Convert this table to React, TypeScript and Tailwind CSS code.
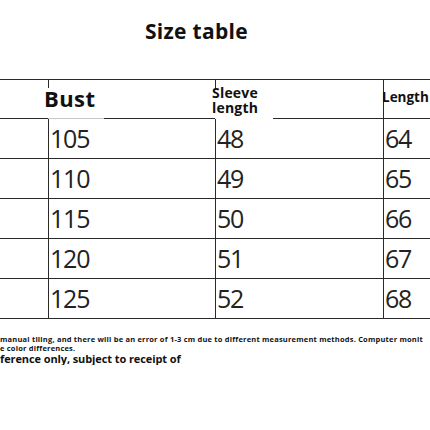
import React from "react";

const rows = [
  ["105", "48", "64"],
  ["110", "49", "65"],
  ["115", "50", "66"],
  ["120", "51", "67"],
  ["125", "52", "68"],
];

export default function App() {
  return (
    <div
      className="w-[430px] h-[430px] overflow-hidden bg-white text-[#111]"
      style={{ fontFamily: '"Open Sans", "Noto Sans", sans-serif' }}
    >
      <div className="pt-[21px] pl-[145px] h-[79px]">
        <div className="text-[21px] leading-none font-bold tracking-[0.3px] whitespace-nowrap">Size table</div>
      </div>

      {/* header */}
      <div className="grid grid-cols-[48px_167px_168px_47px] border-t border-[#2a2a2a] h-[40px]">
        <div className="border-b border-[#2a2a2a]" />
        <div className="relative">
          <div className="absolute left-0 top-0 h-[8px] border-l border-[#2a2a2a]" />
          <div className="absolute left-[56px] right-0 bottom-0 border-b border-[#2a2a2a]" />
          <div className="absolute left-0 w-[56px] bottom-0 border-b border-[#c8c8c8]" />
          <div className="-ml-[4px] pt-[7px] text-[22px] leading-none font-bold tracking-[0.4px]">Bust</div>
        </div>
        <div className="relative">
          <div className="absolute left-0 top-0 h-[8px] border-l border-[#2a2a2a]" />
          <div className="absolute left-[58px] right-0 bottom-0 border-b border-[#2a2a2a]" />
          <div className="-ml-[3px] pt-[5px] text-[14px] leading-[15px] font-bold tracking-[0.2px]">
            <div>Sleeve</div>
            <div>length</div>
          </div>
        </div>
        <div className="border-l border-b border-[#2a2a2a]">
          <div className="-ml-[2px] pt-[11px] text-[13.5px] leading-none font-bold whitespace-nowrap">
            Length
          </div>
        </div>
      </div>

      {rows.map((r, i) => (
        <div
          key={i}
          className="grid grid-cols-[48px_167px_168px_47px] border-b border-[#2a2a2a] h-[40px]"
        >
          <div />
          {r.map((v, j) => (
            <div
              key={j}
              className="border-l border-[#2a2a2a] pl-[1px] pt-[7px] text-[25px] leading-none tracking-[-1.2px] whitespace-nowrap text-[#222]"
            >
              {v}
            </div>
          ))}
        </div>
      ))}

      <div className="mt-[15px] font-bold whitespace-nowrap overflow-hidden">
        <div className="text-[7.5px] leading-[10px] tracking-[0.2px]">
          manual tiling, and there will be an error of 1-3 cm due to different measurement methods. Computer monit
        </div>
        <div className="text-[7.5px] leading-[9px] tracking-[0.2px]">e color differences.</div>
        <div className="text-[11px] leading-[12px] tracking-[-0.1px]">ference only, subject to receipt of</div>
      </div>
    </div>
  );
}
